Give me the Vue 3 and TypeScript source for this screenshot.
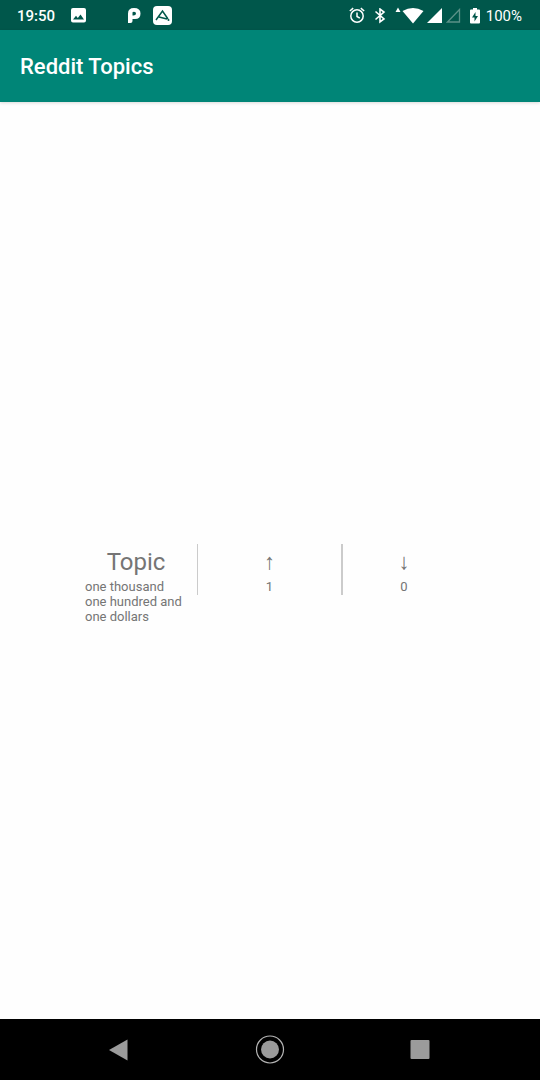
<script setup lang="ts">
import { ref } from 'vue'

const topic = ref('one thousand one hundred and one dollars')
const upvotes = ref(1)
const downvotes = ref(0)
</script>

<template>
  <div class="screen">
    <div class="status">
      <div class="status-left">
        <span class="clock">19:50</span>
        <svg class="photo" width="16" height="16" viewBox="0 0 16 16" aria-hidden="true">
          <path fill="#fff" fill-rule="evenodd" d="M2 0h11q2 0 2 2v10.500q0 2-2 2H2q-2 0-2-2V2q0-2 2-2zM2 11.500h11L9.500 6.500 6.800 10 5 7.800z" />
        </svg>
        <svg class="pay" width="14" height="16" viewBox="0 0 14 16" aria-hidden="true">
          <path fill="#fff" fill-rule="evenodd" d="M1 5.500Q1 0 7 0Q13.500 0 13.500 5.500Q13.500 11 8 11H5.500V13Q5.500 15 3.500 15H1zM5.500 4.500V7.500H6.500Q9 7.500 9 5.500Q9 3.800 7 3.800Q5.500 3.800 5.500 4.500z" />
        </svg>
        <svg width="19" height="19" viewBox="0 0 19 19" aria-hidden="true">
          <rect width="19" height="19" rx="4" fill="#fff" />
          <path d="M3 14L9.500 5L15 13M6 11L14 13" fill="none" stroke="#00574b" stroke-width="1.500" />
          <circle cx="15.500" cy="14" r="1" fill="#00574b" />
        </svg>
      </div>
      <div class="status-right">
        <svg width="16" height="18" viewBox="0 0 16 18" fill="none" stroke="#fff" stroke-width="1.500" aria-hidden="true">
          <circle cx="8" cy="9" r="6.200" />
          <path d="M8 5.500v4l2.800 1.700M0.800 4L4.200 1.200M15.200 4L11.800 1.200" />
        </svg>
        <svg class="bluetooth" width="12" height="16" viewBox="0 0 12 16" fill="none" stroke="#fff" stroke-width="1.600" aria-hidden="true">
          <path d="M1.500 3.500L10 11L6 14V1L10 4L1.500 11.500" />
        </svg>
        <svg class="wifi" width="29" height="18" viewBox="0 0 29 18" fill="#fff" aria-hidden="true">
          <path d="M0.500 5L3 0.500L5.500 5zM7.500 4Q18-2 28.500 4L18 16.500z" />
        </svg>
        <svg class="signal" width="16" height="16" viewBox="0 0 16 16" aria-hidden="true">
          <path fill="#fff" d="M0 15L15 0V15z" />
        </svg>
        <svg class="signal" width="16" height="16" viewBox="0 0 16 16" aria-hidden="true">
          <path fill="none" stroke="#5b9188" stroke-width="1.300" d="M1.500 14L13.500 1.500V14z" />
        </svg>
        <svg class="battery" width="10" height="16" viewBox="0 0 10 16" aria-hidden="true">
          <path fill="#fff" d="M3 0H7V1.500H9Q10 1.500 10 2.500V14.500Q10 15.500 9 15.500H1Q0 15.500 0 14.500V2.500Q0 1.500 1 1.500H3z" />
          <path fill="#00574b" d="M5.500 4L2 9.500H4.500V13.500L8 8H5.500z" />
        </svg>
        <span class="percent">100%</span>
      </div>
    </div>

    <header class="app-bar">
      <h1>Reddit Topics</h1>
    </header>

    <main class="content">
      <section class="topic-row">
        <div class="cell">
          <h2>Topic</h2>
          <p class="description">{{ topic }}</p>
        </div>
        <div class="divider"></div>
        <div class="cell">
          <button type="button" class="vote" aria-label="Upvote" @click="upvotes++">↑</button>
          <p class="count">{{ upvotes }}</p>
        </div>
        <div class="divider"></div>
        <div class="cell">
          <button type="button" class="vote" aria-label="Downvote" @click="downvotes++">↓</button>
          <p class="count">{{ downvotes }}</p>
        </div>
      </section>
    </main>

    <nav class="nav-bar" aria-label="System navigation">
      <button type="button" aria-label="Back">
        <svg width="30" height="30" viewBox="0 0 30 30" aria-hidden="true"><path fill="#9b9b9b" d="M4 15L22.500 4.500V25.500z" /></svg>
      </button>
      <button type="button" aria-label="Home">
        <svg width="30" height="30" viewBox="0 0 30 30" aria-hidden="true">
          <circle cx="15" cy="14.500" r="13.500" fill="none" stroke="#b5b5b5" stroke-width="1.200" />
          <circle cx="15" cy="14.500" r="9" fill="#9b9b9b" />
        </svg>
      </button>
      <button type="button" aria-label="Recent apps">
        <svg width="30" height="30" viewBox="0 0 30 30" aria-hidden="true"><rect x="5.500" y="5" width="19" height="19" rx="1" fill="#9b9b9b" /></svg>
      </button>
    </nav>
  </div>
</template>

<style>
body {
  margin: 0;
}
</style>

<style scoped>
.screen {
  display: flex;
  flex-direction: column;
  min-height: 100vh;
  background: #fefefe;
  color: #757575;
  font-family: Roboto, "Noto Sans", sans-serif;
}

h1,
h2,
p {
  margin: 0;
  font-weight: 400;
}

svg {
  display: block;
  flex: none;
}

button {
  padding: 0;
  border: 0;
  background: none;
  color: inherit;
  font: inherit;
}

.status {
  display: flex;
  justify-content: space-between;
  box-sizing: border-box;
  height: 30px;
  padding: 1px 17px 0;
  background: #00574b;
  color: #fff;
  font-size: 15px;
  font-weight: 500;
}

.status-left,
.status-right {
  display: flex;
  align-items: center;
}

.photo {
  margin-left: 16px;
}

.pay {
  margin: 0 12px 0 40px;
}

.percent {
  font-weight: 400;
}

.bluetooth {
  margin-left: 9px;
}

.wifi {
  margin-left: 9px;
}

.signal {
  margin-left: 3px;
}

.battery {
  margin: 0 6px 0 8px;
}

.status-right {
  margin-right: 1px;
}

.app-bar {
  display: flex;
  align-items: center;
  box-sizing: border-box;
  height: 72px;
  padding: 2px 20px 0;
  background: #008577;
  color: #fff;
  box-shadow: 0 1px 3px rgba(0, 0, 0, 0.15);
}

h1 {
  font-size: 22px;
  font-weight: 500;
  line-height: 26px;
}

.content {
  display: flex;
  flex: 1;
  align-items: center;
  justify-content: center;
  padding-top: 46px;
}

.topic-row {
  display: grid;
  grid-template-columns: 122px 1px 143px 2px 122px;
}

.cell {
  display: flex;
  flex-direction: column;
  align-items: center;
}

.divider {
  height: 51px;
  background: #cbcbcb;
}

h2,
.vote {
  height: 35px;
  font-size: 24px;
  line-height: 36px;
}

.vote {
  font-family: "Liberation Sans", sans-serif;
  font-size: 22px;
}

.description,
.count {
  font-size: 13px;
  line-height: 15px;
}

.description {
  width: 102px;
}

.nav-bar {
  display: flex;
  align-items: center;
  justify-content: space-around;
  height: 61px;
  padding: 0 45px;
  background: #000;
}
</style>
